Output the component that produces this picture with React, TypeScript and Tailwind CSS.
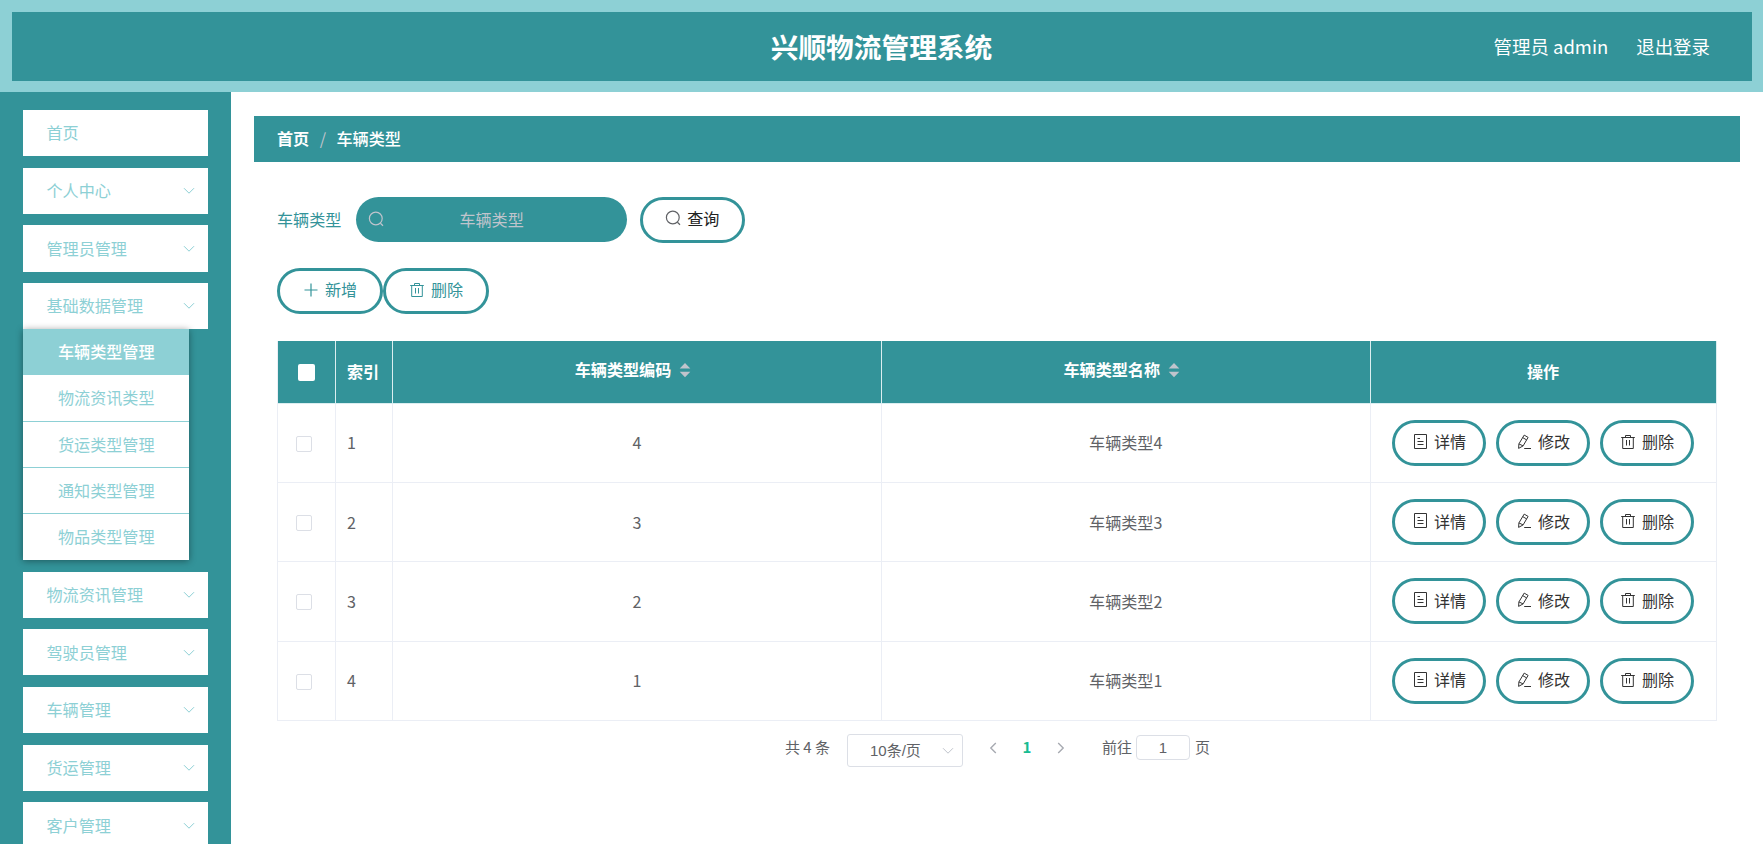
import { Fragment, type ReactNode } from 'react';

const menu = [
  { name: '首页' },
  { name: '个人中心', sub: true },
  { name: '管理员管理', sub: true },
  {
    name: '基础数据管理',
    sub: true,
    children: ['车辆类型管理', '物流资讯类型', '货运类型管理', '通知类型管理', '物品类型管理'],
  },
  { name: '物流资讯管理', sub: true },
  { name: '驾驶员管理', sub: true },
  { name: '车辆管理', sub: true },
  { name: '货运管理', sub: true },
  { name: '客户管理', sub: true },
];

const rows = [
  { id: 1, code: '4', name: '车辆类型4' },
  { id: 2, code: '3', name: '车辆类型3' },
  { id: 3, code: '2', name: '车辆类型2' },
  { id: 4, code: '1', name: '车辆类型1' },
];

function Icon({ children, className = '' }: { children: ReactNode; className?: string }) {
  return (
    <svg viewBox="0 0 16 16" fill="none" stroke="currentColor" className={`size-4 shrink-0 ${className}`}>
      {children}
    </svg>
  );
}

const SearchIcon = ({ className }: { className?: string }) => (
  <Icon className={className}>
    <circle cx="7.8" cy="7.5" r="6.4" strokeWidth="1.2" />
    <path d="M12.4 12.2l2.6 2.5" strokeWidth="1.2" />
  </Icon>
);

const PlusIcon = () => (
  <Icon className="mt-px">
    <path d="M8 1.5v13M1.5 8h13" strokeWidth="1.2" />
  </Icon>
);

const DeleteIcon = () => (
  <Icon className="mt-px">
    <path d="M1.2 3.5h13.6M5.5 3.5v-2h5v2M2.7 3.5v11h10.6v-11M6.5 6v5.5M9.5 6v5.5" />
  </Icon>
);

const DetailIcon = () => (
  <Icon className="mt-px">
    <path d="M2.5 .5h12v14h-12zM5.5 4.5h2.5M5.5 7.5h6M5.5 10.5h6" />
  </Icon>
);

const EditIcon = () => (
  <Icon className="mt-px">
    <path d="M8.2 1.1l3.9 2.3-5 8.5-4.5 2.5.3-4.5zM6.7 3.6l3.9 2.3M2.9 9.9l4.2 2M8.2 14.5h6.8" />
  </Icon>
);

function Chevron({ className = '' }: { className?: string }) {
  return (
    <svg viewBox="0 0 12 8" fill="none" stroke="currentColor" className={`w-3 h-2 ${className}`}>
      <path d="M1 1.2l5 5 5-5" />
    </svg>
  );
}

function Sort() {
  return (
    <svg viewBox="0 0 12 16" fill="#c0c4cc" className="ml-[8px] mt-px w-3 h-4">
      <path d="M6 1l5.3 5.5H.7zM6 15.2L.7 9.7h10.6z" />
    </svg>
  );
}

function Button({ icon, children, className }: { icon: ReactNode; children: ReactNode; className: string }) {
  return (
    <button
      className={`flex h-[46px] items-center justify-center rounded-full border-3 border-[#339399] bg-white pb-[3px] ${className}`}
    >
      {icon}
      <span className="ml-[6px]">{children}</span>
    </button>
  );
}

function Header() {
  return (
    <header className="flex h-[92px] shrink-0 bg-[#8dd0d5] p-[11.5px]">
      <div className="grid flex-1 grid-cols-3 items-center bg-[#339399] px-[41.5px] text-white">
        <h1 className="col-start-2 text-center text-[27.7px] font-bold">兴顺物流管理系统</h1>
        <div className="flex justify-end gap-[28px] text-[18.46px]">
          <span>管理员 admin</span>
          <span>退出登录</span>
        </div>
      </div>
    </header>
  );
}

function Sidebar() {
  return (
    <aside className="w-[231px] shrink-0 bg-[#339399] px-[23px] pt-[18px] text-[#8dd0d5]">
      {menu.map((item) => (
        <div key={item.name} className="mb-[11.5px]">
          <div className="flex h-[46.2px] items-center justify-between bg-white pb-[1.5px] pl-[23.5px] pr-[13px]">
            {item.name}
            {item.sub && <Chevron className="mt-[2px]" />}
          </div>
          {item.children && (
            <ul className="w-[166px] shadow-[0_1px_7px_rgba(0,0,0,0.4)]">
              {item.children.map((child, i) => (
                <li
                  key={child}
                  className={`flex h-[46.16px] items-center border-b pb-px pl-[35px] ${
                    i === 0
                      ? 'border-[#8dd0d5] bg-[#8dd0d5] font-medium text-white'
                      : i === 4
                        ? 'border-white bg-white'
                        : 'border-[#8dd0d5] bg-white'
                  }`}
                >
                  {child}
                </li>
              ))}
            </ul>
          )}
        </div>
      ))}
    </aside>
  );
}

function Table() {
  const head = 'flex h-[62.5px] items-center border-r border-b border-[#dbeef0] bg-[#339399] font-bold text-white';
  const cell = 'flex h-[79.4px] items-center border-r border-b border-[#ebeef5]';
  return (
    <div className="mt-[27.5px] grid grid-cols-[58px_57px_489px_488.5px_346px] border-l border-[#ebeef5]">
      <div className={`${head} pl-[20px]`}>
        <span className="mt-[2px] size-[17px] rounded-[2px] bg-white" />
      </div>
      <div className={`${head} pl-[11px] pb-px`}>索引</div>
      <div className={`${head} justify-center pr-[8px] pb-[5px]`}>
        车辆类型编码
        <Sort />
      </div>
      <div className={`${head} justify-center pr-[8px] pb-[5px]`}>
        车辆类型名称
        <Sort />
      </div>
      <div className={`${head} justify-center pb-px`}>操作</div>
      {rows.map((row) => (
        <Fragment key={row.id}>
          <div className={`${cell} pl-[18px]`}>
            <span className="mt-[2px] size-4 rounded-[2px] border border-[#dcdfe6] bg-white" />
          </div>
          <div className={`${cell} pl-[11px] pb-px`}>{row.id}</div>
          <div className={`${cell} justify-center pb-px`}>{row.code}</div>
          <div className={`${cell} justify-center pb-px`}>{row.name}</div>
          <div className={`${cell} justify-center gap-[10px] text-[#333]`}>
            <Button icon={<DetailIcon />} className="w-[94px]">详情</Button>
            <Button icon={<EditIcon />} className="w-[94px]">修改</Button>
            <Button icon={<DeleteIcon />} className="w-[94px]">删除</Button>
          </div>
        </Fragment>
      ))}
    </div>
  );
}

function Pagination() {
  return (
    <div className="flex items-start pl-[508px] pt-[13px] text-[15px] leading-[26px] font-['Liberation_Sans','Noto_Sans_CJK_SC',sans-serif]">
      <span className="w-[62px] font-['Noto_Sans_CJK_SC',sans-serif]">共 4 条</span>
      <div className="flex h-[33px] w-[116px] items-center rounded-[3px] border border-[#dcdfe6] pl-[22px]">
        10条/页
        <Chevron className="ml-[21px] text-[#c0c4cc]" />
      </div>
      <Chevron className="ml-[24px] mt-[9.5px] rotate-90 text-[#a8abb2] stroke-[1.4]" />
      <span className="ml-[22px] w-3 text-center font-bold text-[#18bc92] font-['Noto_Sans_CJK_SC',sans-serif]">1</span>
      <Chevron className="ml-[22px] mt-[9.5px] -rotate-90 text-[#a8abb2] stroke-[1.4]" />
      <span className="ml-[35px] pt-px">前往</span>
      <span className="ml-[4px] mt-px h-[25px] w-[54px] rounded-[4px] border border-[#dcdfe6] text-center leading-[24px]">1</span>
      <span className="ml-[5px] pt-px">页</span>
    </div>
  );
}

export default function App() {
  return (
    <div className="flex h-[844px] flex-col overflow-hidden bg-white text-[16.1px] leading-6 text-[#606266] font-['Noto_Sans_CJK_SC',sans-serif]">
      <Header />
      <div className="flex min-h-0 flex-1">
        <Sidebar />
        <main className="flex-1 pl-[23px] pr-[23px] pt-[23.5px]">
          <div className="flex h-[46px] items-center bg-[#339399] pb-px pl-[23px] text-white">
            <span className="font-bold">首页</span>
            <span className="mx-[10.5px] text-[#c0c4cc]">/</span>
            <span className="font-medium">车辆类型</span>
          </div>
          <div className="pl-[23px]">
            <div className="mt-[35px] flex items-center text-[#339399]">
              <span className="pb-px">车辆类型</span>
              <div className="ml-[15px] flex h-[45px] w-[271px] items-center rounded-full bg-[#339399] pl-[12px] pb-[2px] text-[#c0c4cc]">
                <SearchIcon />
                <span className="ml-[75px]">车辆类型</span>
              </div>
              <Button icon={<SearchIcon className="text-[#606266]" />} className="ml-[13px] w-[105px] pr-px text-[#222]">
                查询
              </Button>
            </div>
            <div className="mt-[25px] flex text-[#339399]">
              <Button icon={<PlusIcon />} className="w-[106px]">新增</Button>
              <Button icon={<DeleteIcon />} className="w-[106px]">删除</Button>
            </div>
            <Table />
            <Pagination />
          </div>
        </main>
      </div>
    </div>
  );
}
